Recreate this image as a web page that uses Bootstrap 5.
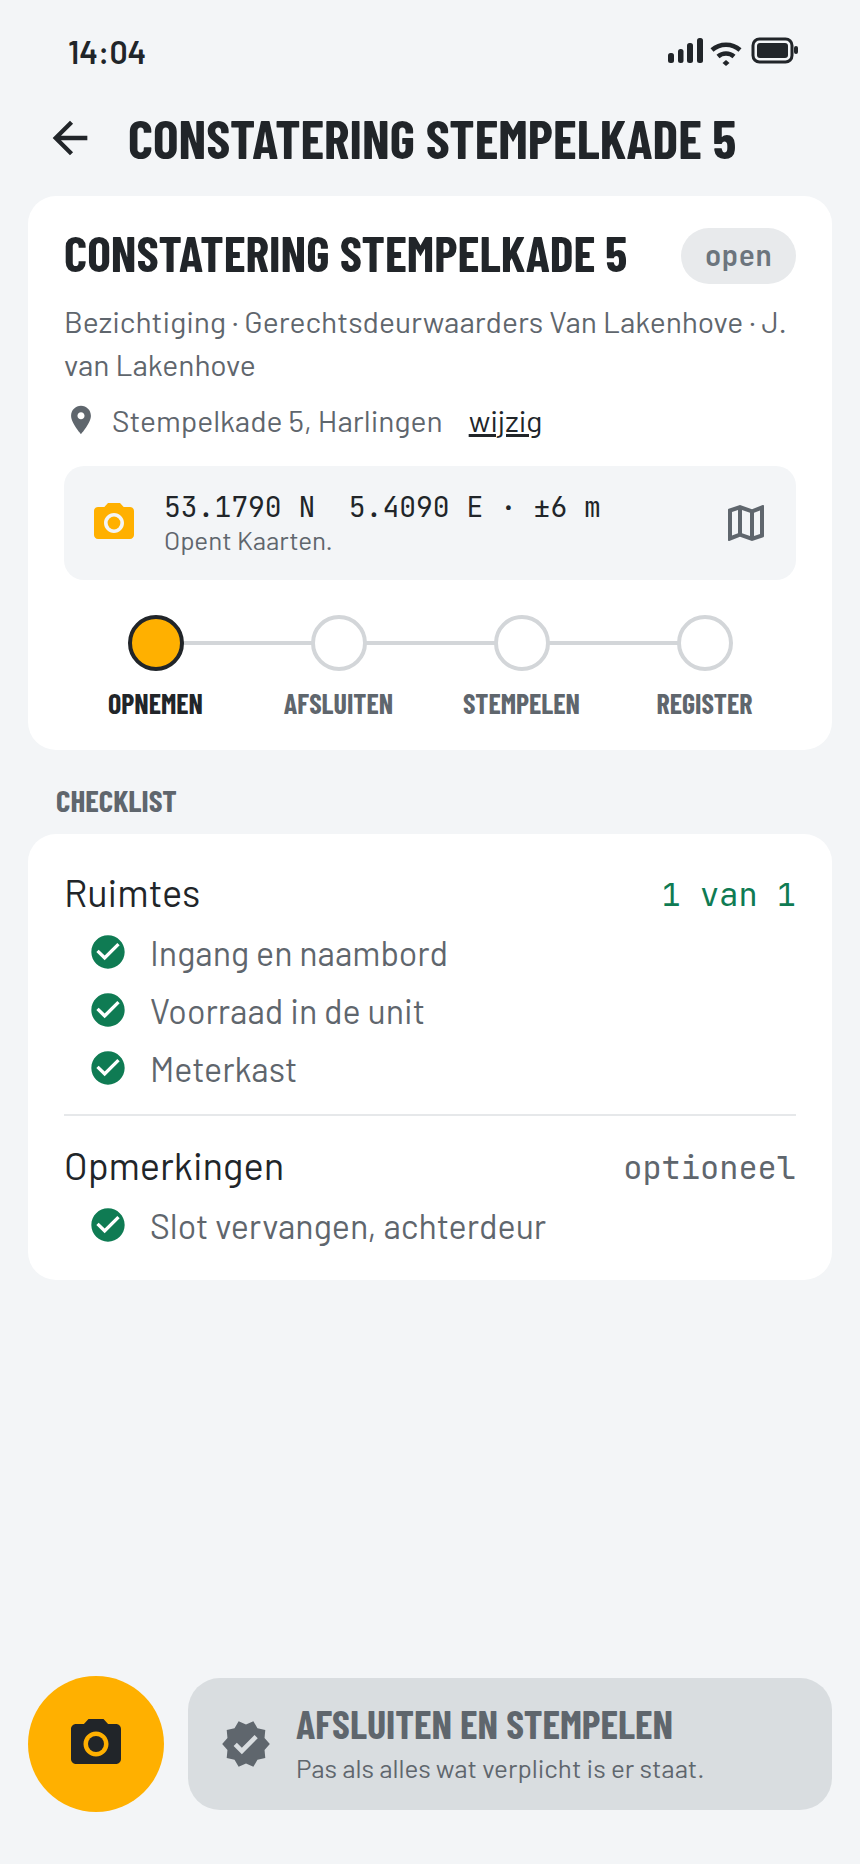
<!DOCTYPE html>
<html lang="nl">
<head>
    <meta charset="UTF-8">
    <meta name="viewport" content="width=device-width, initial-scale=1.0">
    <title>Constatering Stempelkade 5</title>
    <link href="https://cdn.jsdelivr.net/npm/bootstrap@5.3.0/dist/css/bootstrap.min.css" rel="stylesheet">
    <style>
        body {
            background-color: #f3f5f7;
            color: #212529;
            font-family: "Barlow", "Roboto", "Liberation Sans", sans-serif;
        }
        .screen {
            height: 1864px;
            padding: 0 28px 52px;
        }
        .cond {
            font-family: "Barlow Condensed", "Roboto Condensed", "Roboto", sans-serif;
            font-weight: 700;
        }
        .mono {
            font-family: "JetBrains Mono", "DejaVu Sans Mono", "Liberation Mono", monospace;
        }
        .status-row {
            height: 104px;
            padding: 0 34px 2px 40px;
        }
        .status-time {
            font-size: 32px;
            font-weight: 600;
        }
        .top-row {
            height: 92px;
            gap: 32px;
            padding: 0 0 24px 16px;
        }
        .top-title {
            font-size: 54px;
            line-height: 1;
            margin: 0;
        }
        .white-box {
            background: #fff;
            border-radius: 28px;
            padding: 32px 36px 30px;
        }
        .white-box.is-list {
            padding: 36px 36px 26px;
        }
        .case-title {
            font-size: 50px;
            line-height: 1;
            margin: -8px 0 0;
        }
        .state-pill {
            background: #e8eaec;
            color: #6c757d;
            font-size: 28px;
            font-weight: 700;
            height: 56px;
            padding: 0 24px;
            border-radius: 28px;
        }
        .case-sub {
            color: #5f666d;
            font-size: 30px;
            line-height: 42.5px;
            margin: 16px 0 0;
        }
        .addr-row {
            color: #5f666d;
            font-size: 30px;
            margin-top: 14px;
            height: 42px;
            gap: 14px;
        }
        .addr-row a {
            color: #212529;
            margin-left: 12px;
        }
        .coord-box {
            background: #f3f5f7;
            border-radius: 20px;
            height: 114px;
            margin-top: 25px;
            padding: 0 26px;
            gap: 26px;
        }
        .coord-text {
            padding-bottom: 5px;
        }
        .coord-main {
            font-size: 28px;
            line-height: 38px;
        }
        .coord-note {
            color: #5f666d;
            font-size: 26px;
            line-height: 28px;
        }
        .steps {
            margin-top: 35px;
            position: relative;
        }
        .step-line {
            position: absolute;
            left: 92px;
            right: 92px;
            top: 26px;
            height: 4px;
            background: #d3d6d9;
        }
        .step-item {
            width: 25%;
            position: relative;
            text-align: center;
            color: #5f666d;
            font-size: 28px;
            line-height: 34px;
        }
        .step-dot {
            width: 56px;
            height: 56px;
            margin: 0 auto 15px;
            border-radius: 50%;
            background: #fff;
            border: 4px solid #d3d6d9;
        }
        .step-item.is-active { color: #212529; }
        .step-item.is-active .step-dot {
            background: #ffb000;
            border-color: #212529;
        }
        .section-label {
            color: #5f666d;
            font-size: 31px;
            line-height: 34px;
            margin: 33px 0 17px 28px;
        }
        .group-head {
            font-size: 38px;
            line-height: 44px;
            height: 44px;
            margin-bottom: 9px;
        }
        .group-count {
            font-size: 32px;
            margin-top: 5px;
            color: #0f7b53;
        }
        .group-opt {
            font-size: 32px;
            margin-top: 5px;
            color: #5f666d;
        }
        .check-item {
            height: 58px;
            padding-left: 24px;
            gap: 22px;
            color: #5f666d;
            font-size: 34px;
        }
        .group-rule {
            border-top: 2px solid #e6e8ea;
            margin: 17px 0 27px;
        }
        .bottom-row {
            gap: 24px;
        }
        .round-cam {
            width: 136px;
            height: 136px;
            border-radius: 50%;
            background: #ffb000;
            border: 0;
            padding: 0;
        }
        .close-btn {
            background: #d9dde0;
            color: #5f666d;
            height: 132px;
            border-radius: 32px;
            padding: 0 32px;
            gap: 24px;
        }
        .close-text {
            padding-bottom: 3px;
        }
        .close-title {
            font-size: 40px;
            line-height: 44px;
        }
        .close-sub {
            font-size: 26px;
            line-height: 32px;
            margin-top: 7px;
        }
    </style>
</head>
<body>
    <div class="screen d-flex flex-column">
        <!-- statusbalk -->
        <div class="status-row d-flex justify-content-between align-items-center">
            <span class="status-time">14:04</span>
            <svg width="130" height="30" viewBox="0 0 130 30" fill="#212529">
                <rect x="0" y="17" width="6" height="10" rx="2.5"/>
                <rect x="10" y="13" width="5.5" height="14" rx="2.5"/>
                <rect x="19" y="7" width="6" height="20" rx="2.5"/>
                <rect x="29" y="2" width="6" height="25" rx="2.5"/>
                <path d="M44 14 A21 21 0 0 1 72 14" fill="none" stroke="#212529" stroke-width="4.5"/>
                <path d="M50 20.5 A12 12 0 0 1 66 20.5" fill="none" stroke="#212529" stroke-width="4.5"/>
                <path d="M58 24 l3.5 3 -3.5 3 -3.5-3z"/>
                <rect x="85" y="3" width="39" height="23" rx="6.5" fill="none" stroke="#212529" stroke-width="3"/>
                <rect x="89" y="7" width="31" height="15" rx="3"/>
                <rect x="126" y="10" width="4" height="8" rx="2"/>
            </svg>
        </div>

        <!-- titel -->
        <div class="top-row d-flex align-items-center">
            <svg width="52" height="52" viewBox="0 0 24 24" fill="#212529"><path d="M20 11H7.83l5.59-5.59L12 4l-8 8 8 8 1.41-1.41L7.83 13H20v-2z"/></svg>
            <h1 class="top-title cond">CONSTATERING STEMPELKADE 5</h1>
        </div>

        <!-- zaak -->
        <div class="white-box">
            <div class="d-flex justify-content-between align-items-center">
                <h2 class="case-title cond">CONSTATERING STEMPELKADE 5</h2>
                <span class="state-pill mono d-flex align-items-center">open</span>
            </div>
            <p class="case-sub">Bezichtiging · Gerechtsdeurwaarders Van Lakenhove · J. van Lakenhove</p>
            <div class="addr-row d-flex align-items-center">
                <svg width="34" height="34" viewBox="0 0 24 24" fill="#5f666d"><path d="M12 2C8.13 2 5 5.13 5 9c0 5.25 7 13 7 13s7-7.75 7-13c0-3.87-3.13-7-7-7zm0 9.5c-1.38 0-2.5-1.12-2.5-2.5s1.12-2.5 2.5-2.5 2.5 1.12 2.5 2.5-1.12 2.5-2.5 2.5z"/></svg>
                <span>Stempelkade 5, Harlingen</span>
                <a href="#">wijzig</a>
            </div>
            <div class="coord-box d-flex align-items-center">
                <svg width="48" height="48" viewBox="0 0 24 24" fill="#ffb000"><circle cx="12" cy="12" r="3.2"/><path d="M9 2L7.17 4H4c-1.1 0-2 .9-2 2v12c0 1.1.9 2 2 2h16c1.1 0 2-.9 2-2V6c0-1.1-.9-2-2-2h-3.17L15 2H9zm3 15c-2.76 0-5-2.24-5-5s2.24-5 5-5 5 2.24 5 5-2.24 5-5 5z"/></svg>
                <div class="coord-text flex-grow-1">
                    <div class="coord-main mono">53.1790 N&nbsp; 5.4090 E · ±6 m</div>
                    <div class="coord-note">Opent Kaarten.</div>
                </div>
                <svg width="48" height="48" viewBox="0 0 24 24" fill="#5f666d"><path d="M20.5 3l-.16.03L15 5.1 9 3 3.36 4.9c-.21.07-.36.25-.36.48V20.5c0 .28.22.5.5.5l.16-.03L9 18.9l6 2.1 5.64-1.9c.21-.07.36-.25.36-.48V3.5c0-.28-.22-.5-.5-.5zM10 5.47l4 1.4v11.66l-4-1.4V5.47zm-5 .99l3-1.01v11.7l-3 1.16V6.46zm14 11.08l-3 1.01V6.86l3-1.16v11.84z"/></svg>
            </div>
            <div class="steps d-flex">
                <div class="step-line"></div>
                <div class="step-item cond is-active"><div class="step-dot"></div>OPNEMEN</div>
                <div class="step-item cond"><div class="step-dot"></div>AFSLUITEN</div>
                <div class="step-item cond"><div class="step-dot"></div>STEMPELEN</div>
                <div class="step-item cond"><div class="step-dot"></div>REGISTER</div>
            </div>
        </div>

        <div class="section-label cond">CHECKLIST</div>

        <!-- checklist -->
        <div class="white-box is-list">
            <div class="group-head d-flex justify-content-between align-items-center">
                <span>Ruimtes</span>
                <span class="group-count mono">1 van 1</span>
            </div>
            <div class="check-item d-flex align-items-center">
                <svg width="40" height="40" viewBox="0 0 24 24" fill="#0f7b53"><path d="M12 2C6.48 2 2 6.48 2 12s4.48 10 10 10 10-4.48 10-10S17.52 2 12 2zm-2 15l-5-5 1.41-1.41L10 14.17l7.59-7.59L19 8l-9 9z"/></svg>
                <span>Ingang en naambord</span>
            </div>
            <div class="check-item d-flex align-items-center">
                <svg width="40" height="40" viewBox="0 0 24 24" fill="#0f7b53"><path d="M12 2C6.48 2 2 6.48 2 12s4.48 10 10 10 10-4.48 10-10S17.52 2 12 2zm-2 15l-5-5 1.41-1.41L10 14.17l7.59-7.59L19 8l-9 9z"/></svg>
                <span>Voorraad in de unit</span>
            </div>
            <div class="check-item d-flex align-items-center">
                <svg width="40" height="40" viewBox="0 0 24 24" fill="#0f7b53"><path d="M12 2C6.48 2 2 6.48 2 12s4.48 10 10 10 10-4.48 10-10S17.52 2 12 2zm-2 15l-5-5 1.41-1.41L10 14.17l7.59-7.59L19 8l-9 9z"/></svg>
                <span>Meterkast</span>
            </div>
            <div class="group-rule"></div>
            <div class="group-head d-flex justify-content-between align-items-center">
                <span>Opmerkingen</span>
                <span class="group-opt mono">optioneel</span>
            </div>
            <div class="check-item d-flex align-items-center">
                <svg width="40" height="40" viewBox="0 0 24 24" fill="#0f7b53"><path d="M12 2C6.48 2 2 6.48 2 12s4.48 10 10 10 10-4.48 10-10S17.52 2 12 2zm-2 15l-5-5 1.41-1.41L10 14.17l7.59-7.59L19 8l-9 9z"/></svg>
                <span>Slot vervangen, achterdeur</span>
            </div>
        </div>

        <!-- onderbalk -->
        <div class="bottom-row d-flex align-items-center mt-auto">
            <button class="round-cam d-flex align-items-center justify-content-center flex-shrink-0" type="button">
                <svg width="60" height="60" viewBox="0 0 24 24" fill="#212529"><circle cx="12" cy="12" r="3.2"/><path d="M9 2L7.17 4H4c-1.1 0-2 .9-2 2v12c0 1.1.9 2 2 2h16c1.1 0 2-.9 2-2V6c0-1.1-.9-2-2-2h-3.17L15 2H9zm3 15c-2.76 0-5-2.24-5-5s2.24-5 5-5 5 2.24 5 5-2.24 5-5 5z"/></svg>
            </button>
            <div class="close-btn d-flex align-items-center flex-grow-1">
                <svg width="52" height="52" viewBox="0 0 24 24" fill="#5f666d"><path d="M23 12l-2.44-2.79.34-3.69-3.61-.82-1.89-3.2L12 2.96 8.6 1.5 6.71 4.69 3.1 5.5l.34 3.7L1 12l2.44 2.79-.34 3.7 3.61.82L8.6 22.5l3.4-1.47 3.4 1.46 1.89-3.19 3.61-.82-.34-3.69L23 12zm-12.91 4.72l-3.8-3.81 1.48-1.48 2.32 2.33 5.85-5.87 1.48 1.48-7.33 7.35z"/></svg>
                <div class="close-text">
                    <div class="close-title cond">AFSLUITEN EN STEMPELEN</div>
                    <div class="close-sub">Pas als alles wat verplicht is er staat.</div>
                </div>
            </div>
        </div>
    </div>

    <script src="https://cdn.jsdelivr.net/npm/bootstrap@5.3.0/dist/js/bootstrap.bundle.min.js"></script>
</body>
</html>
